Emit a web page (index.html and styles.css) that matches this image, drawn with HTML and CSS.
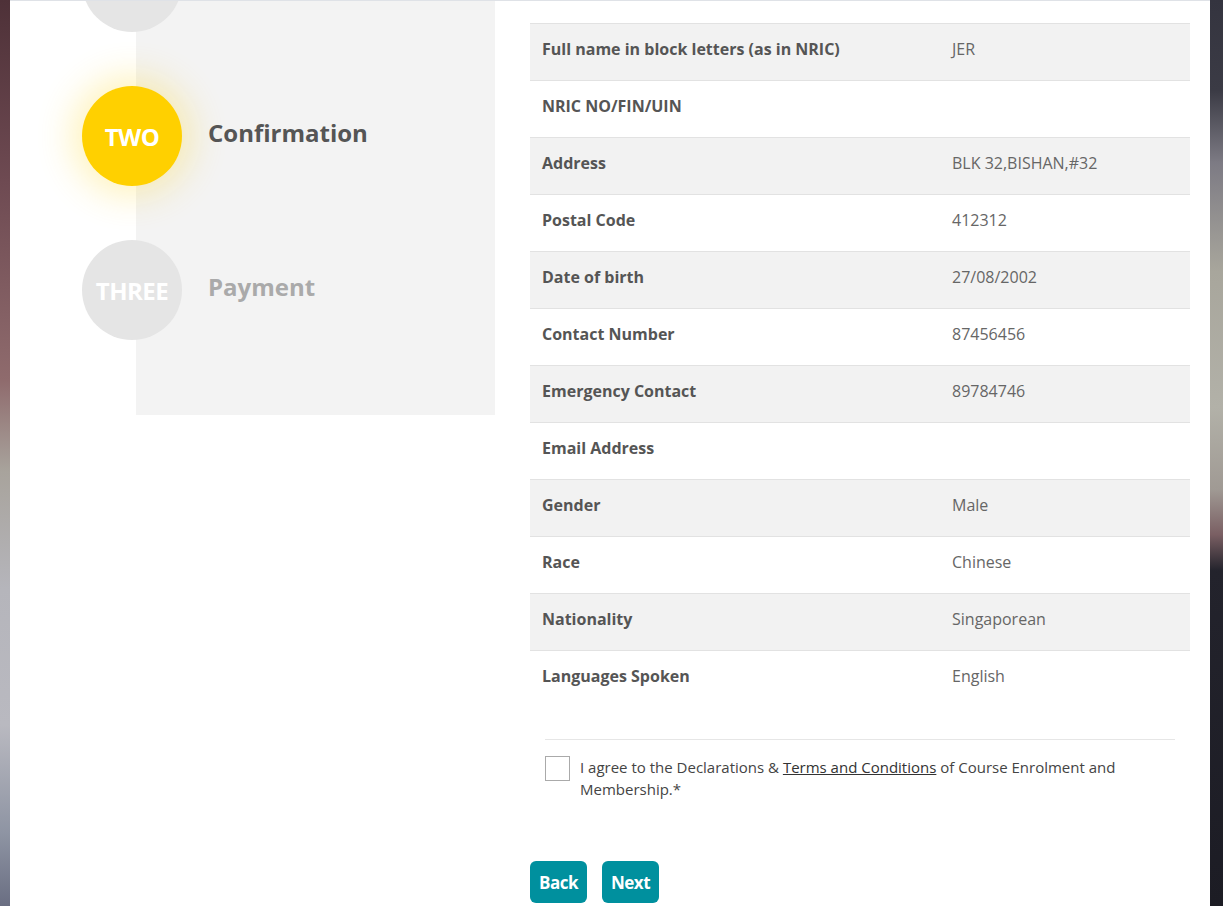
FILE: index.html
```html
<!DOCTYPE html>
<html lang="en">
<head>
    <meta charset="UTF-8">
    <meta name="viewport" content="width=device-width, initial-scale=1.0">
    <title>Course Enrolment - Confirmation</title>
    <link rel="stylesheet" href="styles.css">
</head>
<body>
    <div class="frame">
        <div class="edge edge-left"></div>

        <div class="page">
            <div class="sidebar">
                <div class="steps">
                    <div class="step done">
                        <div class="step-circle">ONE</div>
                        <div class="step-label">Details</div>
                    </div>
                    <div class="step active">
                        <div class="step-circle">TWO</div>
                        <div class="step-label">Confirmation</div>
                    </div>
                    <div class="step">
                        <div class="step-circle">THREE</div>
                        <div class="step-label">Payment</div>
                    </div>
                </div>
            </div>

            <div class="content">
                <table class="summary">
                    <tr><td class="label">Full name in block letters (as in NRIC)</td><td class="value">JER</td></tr>
                    <tr><td class="label">NRIC NO/FIN/UIN</td><td class="value"></td></tr>
                    <tr><td class="label">Address</td><td class="value">BLK 32,BISHAN,#32</td></tr>
                    <tr><td class="label">Postal Code</td><td class="value">412312</td></tr>
                    <tr><td class="label">Date of birth</td><td class="value">27/08/2002</td></tr>
                    <tr><td class="label">Contact Number</td><td class="value">87456456</td></tr>
                    <tr><td class="label">Emergency Contact</td><td class="value">89784746</td></tr>
                    <tr><td class="label">Email Address</td><td class="value"></td></tr>
                    <tr><td class="label">Gender</td><td class="value">Male</td></tr>
                    <tr><td class="label">Race</td><td class="value">Chinese</td></tr>
                    <tr><td class="label">Nationality</td><td class="value">Singaporean</td></tr>
                    <tr><td class="label">Languages Spoken</td><td class="value">English</td></tr>
                </table>

                <hr class="divider">

                <label class="agree">
                    <span class="checkbox"></span>
                    <span class="agree-text">I agree to the Declarations &amp; <a href="#">Terms and Conditions</a> of Course Enrolment and Membership.*</span>
                </label>

                <div class="actions">
                    <button type="button" class="btn">Back</button>
                    <button type="button" class="btn">Next</button>
                </div>
            </div>
        </div>

        <div class="edge edge-right"></div>
    </div>
</body>
</html>
```

FILE: styles.css
```css
html, body {
    margin: 0;
    height: 100%;
}
body {
    font-family: "Open Sans", "Liberation Sans", Arial, sans-serif;
    color: #555;
    overflow: hidden;
}
.frame {
    display: flex;
    height: 906px;
}
.edge {
    flex-shrink: 0;
}
.edge-left {
    width: 10px;
    background: linear-gradient(to bottom, #4e3138 0%, #6e4a52 20%, #8f6b6d 42%, #a8a39c 52%, #b5b5bb 65%, #b9b9c0 80%, #8e94a3 92%, #6a6e82 100%);
}
.edge-right {
    width: 13px;
    background: linear-gradient(to bottom, #34343f 0%, #3b3b45 10%, #7d7b84 18%, #a8a69c 30%, #b2b1a8 45%, #a09a94 54%, #7a5f63 59%, #23232c 63%, #1c1c24 100%);
}
.page {
    flex: 1;
    display: flex;
    align-items: flex-start;
    background: #fff;
    border-top: 1px solid #dfe2e7;
    overflow: hidden;
}

/* steps */
.sidebar {
    flex-shrink: 0;
    display: flex;
    flex-direction: column;
    width: 359px;
    height: 414px;
    margin-left: 126px;
    background: #f3f3f3;
}
.steps {
    display: flex;
    flex-direction: column;
    gap: 54px;
    margin-top: -69px;
    margin-left: -54px;
}
.step {
    display: flex;
    align-items: center;
    gap: 26px;
}
.step-circle {
    width: 100px;
    height: 100px;
    border-radius: 50%;
    background: #e5e5e5;
    color: #fff;
    font-size: 24px;
    font-weight: 700;
    letter-spacing: -0.5px;
    display: flex;
    align-items: center;
    justify-content: center;
    flex-shrink: 0;
}
.step-label {
    font-size: 24px;
    font-weight: 700;
    color: #aaa;
    margin-bottom: 7px;
}
.step.active .step-circle {
    background: #ffd000;
    box-shadow: 0 0 34px 10px rgba(255, 214, 40, 0.3);
}
.step.active .step-label {
    color: #555;
}

/* summary */
.content {
    flex-shrink: 0;
    width: 660px;
    margin-left: 35px;
    padding-top: 22px;
}
.summary {
    width: 100%;
    border-collapse: collapse;
}
.summary tr:nth-child(odd) {
    background: #f2f2f2;
}
.summary td {
    height: 49px;
    padding: 0 12px 7px;
    border-top: 1px solid #e2e2e2;
    font-size: 16px;
    vertical-align: middle;
}
.summary .label {
    width: 386px;
    font-weight: 700;
    color: #555;
}
.summary .value {
    color: #666;
}
.divider {
    margin: 32px 15px 0;
    border: 0;
    border-top: 1px solid #e6e6e6;
}
.agree {
    display: flex;
    align-items: flex-start;
    gap: 10px;
    margin: 16px 15px 0;
    font-size: 15px;
    line-height: 22px;
    color: #444;
}
.checkbox {
    width: 23px;
    height: 23px;
    border: 1px solid #aaa;
    flex-shrink: 0;
    background: #fff;
}
.agree-text a {
    color: #333;
    text-decoration: underline;
}
.actions {
    display: flex;
    gap: 15px;
    margin-top: 61px;
}
.btn {
    height: 42px;
    padding: 0 9px;
    background: #00909e;
    color: #fff;
    border: none;
    border-radius: 6px;
    font-family: inherit;
    font-size: 17px;
    font-weight: 700;
    letter-spacing: -0.5px;
    cursor: pointer;
}
```
